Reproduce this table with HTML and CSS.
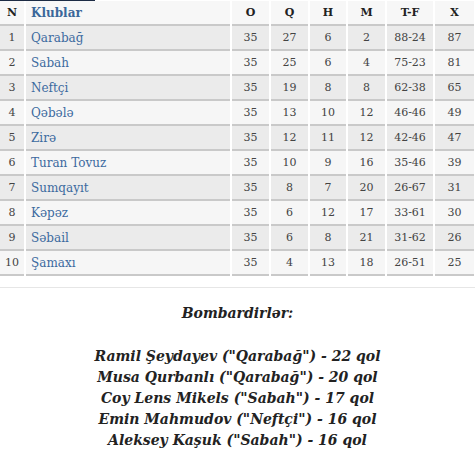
FILE: index.html
```html
<!DOCTYPE html>
<html>
<head>
<meta charset="utf-8">
<link rel="stylesheet" href="styles.css">
</head>
<body>
<div class="topline"></div>
<table class="standings">
  <thead>
    <tr>
      <th class="n">N</th>
      <th class="club">Klublar</th>
      <th class="c-o">O</th>
      <th class="c-q">Q</th>
      <th class="c-h">H</th>
      <th class="c-m">M</th>
      <th class="c-tf">T-F</th>
      <th class="c-x">X</th>
    </tr>
  </thead>
  <tbody>
    <tr class="odd"><td class="n">1</td><td class="club">Qarabağ</td><td>35</td><td>27</td><td>6</td><td>2</td><td>88-24</td><td>87</td></tr>
    <tr class="even"><td class="n">2</td><td class="club">Sabah</td><td>35</td><td>25</td><td>6</td><td>4</td><td>75-23</td><td>81</td></tr>
    <tr class="odd"><td class="n">3</td><td class="club">Neftçi</td><td>35</td><td>19</td><td>8</td><td>8</td><td>62-38</td><td>65</td></tr>
    <tr class="even"><td class="n">4</td><td class="club">Qəbələ</td><td>35</td><td>13</td><td>10</td><td>12</td><td>46-46</td><td>49</td></tr>
    <tr class="odd"><td class="n">5</td><td class="club">Zirə</td><td>35</td><td>12</td><td>11</td><td>12</td><td>42-46</td><td>47</td></tr>
    <tr class="even"><td class="n">6</td><td class="club">Turan Tovuz</td><td>35</td><td>10</td><td>9</td><td>16</td><td>35-46</td><td>39</td></tr>
    <tr class="odd"><td class="n">7</td><td class="club">Sumqayıt</td><td>35</td><td>8</td><td>7</td><td>20</td><td>26-67</td><td>31</td></tr>
    <tr class="even"><td class="n">8</td><td class="club">Kəpəz</td><td>35</td><td>6</td><td>12</td><td>17</td><td>33-61</td><td>30</td></tr>
    <tr class="odd"><td class="n">9</td><td class="club">Səbail</td><td>35</td><td>6</td><td>8</td><td>21</td><td>31-62</td><td>26</td></tr>
    <tr class="even"><td class="n">10</td><td class="club">Şamaxı</td><td>35</td><td>4</td><td>13</td><td>18</td><td>26-51</td><td>25</td></tr>
  </tbody>
</table>
<div class="divider"></div>
<div class="scorers">
  <p class="title">Bombardirlər:</p>
  <p class="list">Ramil Şeydayev ("Qarabağ") - 22 qol<br>Musa Qurbanlı ("Qarabağ") - 20 qol<br>Coy Lens Mikels ("Sabah") - 17 qol<br>Emin Mahmudov ("Neftçi") - 16 qol<br>Aleksey Kaşuk ("Sabah") - 16 qol</p>
</div>
</body>
</html>
```
FILE: styles.css
```css
html, body {
  margin: 0;
  padding: 0;
  background: #ffffff;
}
body {
  font-family: "DejaVu Serif", serif;
  width: 475px;
}
.topline {
  width: 95px;
  height: 1px;
  background: #1c2b44;
}
.standings {
  width: 477px;
  margin-left: -2px;
  border-collapse: separate;
  border-spacing: 2px 0;
  table-layout: fixed;
}
.standings th, .standings td {
  height: 23px;
  padding: 0;
  border-bottom: 2px solid #c9c9c9;
  text-align: center;
  font-size: 11px;
  color: #444;
  white-space: nowrap;
}
.standings th {
  background: #f7f7f7;
  font-weight: bold;
  color: #222;
  height: 23px;
  font-size: 11px;
}
.standings th.club {
  color: #3a679a;
  font-size: 12px;
  text-align: left;
  padding-left: 5px;
}
.standings td.club {
  text-align: left;
  padding-left: 5px;
  color: #3c6a9f;
  font-size: 12px;
}
.standings .n { width: 24px; }
.standings .club { width: 199px; }
.standings .c-o { width: 37px; }
.standings .c-q { width: 37px; }
.standings .c-h { width: 36px; }
.standings .c-m { width: 37px; }
.standings .c-tf { width: 46px; }
.standings .c-x { width: 39px; }
.standings tr.odd td { background: #ebebeb; }
.standings tr.even td { background: #f6f6f6; }
.divider {
  margin-top: 11px;
  height: 1px;
  background: #e6e6e6;
}
.scorers {
  text-align: center;
  font-weight: bold;
  font-style: italic;
  color: #222;
}
.scorers .title {
  margin: 16px 0 0;
  font-size: 14px;
  line-height: 19px;
}
.scorers .list {
  margin: 23px 0 0;
  font-size: 14px;
  line-height: 21px;
}
```
